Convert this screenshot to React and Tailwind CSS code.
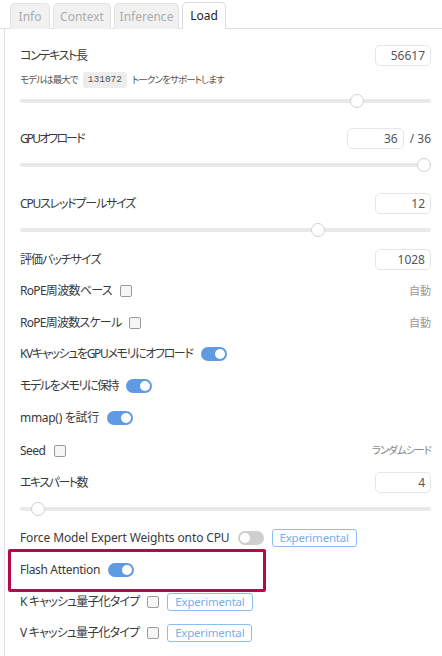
const FONT = { fontFamily: '"Noto Sans", "Noto Sans CJK JP", sans-serif', fontFeatureSettings: '"palt"' };

const TABS = [
  { name: 'Info', w: 'w-[40px]' },
  { name: 'Context', w: 'w-[58px]' },
  { name: 'Inference', w: 'w-[65px]' },
  { name: 'Load', w: 'w-[44px]' },
];

function NumberBox({ value, className = 'w-[56px]' }) {
  return (
    <div
      className={
        'h-[21px] rounded-[5px] border border-[#e6e6e6] bg-white flex items-center justify-end pr-[5px] text-[12px] text-[#555] ' +
        className
      }
    >
      {value}
    </div>
  );
}

function Slider({ pct }) {
  return (
    <div className="relative h-[14px] flex items-center">
      <div className="w-full h-[4px] rounded-full bg-[#e9e9e9]" />
      <div
        className="absolute top-0 w-[14px] h-[14px] rounded-full bg-white border-[1.5px] border-[#d0d0d0]"
        style={{ left: `calc(${pct} * (100% - 14px))` }}
      />
    </div>
  );
}

function Checkbox() {
  return <span className="w-[12px] h-[12px] rounded-[2px] border border-[#9a9a9a] bg-[#f6f6f6] shrink-0" />;
}

function Toggle({ on = true }) {
  return (
    <span
      className={
        'w-[26px] h-[14px] rounded-full flex items-center px-[2px] shrink-0 ' +
        (on ? 'bg-[#5f9be2] justify-end' : 'bg-[#cfcfcf] justify-start')
      }
    >
      <span className="w-[10px] h-[10px] rounded-full bg-white" />
    </span>
  );
}

function Badge() {
  return (
    <span className="h-[18px] px-[7px] rounded-[3px] border border-[#8cbdf2] text-[#79aeea] text-[11.5px] tracking-[-0.2px] flex items-center leading-none">
      Experimental
    </span>
  );
}

function Row({ children, className = '' }) {
  return <div className={'h-[20px] flex items-center gap-[8px] text-[12px] text-[#3a3a3a] ' + className}>{children}</div>;
}

function FieldRow({ label, tight, children, className = '' }) {
  return (
    <div className={'h-[21px] flex items-center justify-between text-[12px] text-[#3a3a3a] ' + className}>
      <span className={tight}>{label}</span>
      {children}
    </div>
  );
}

export default function App() {
  return (
    <div className="w-[442px] h-[656px] bg-white overflow-hidden" style={FONT}>
      <div className="h-[29px] flex items-end gap-[3px] pl-[10px] border-b border-[#dedede]">
        {TABS.map((t) => (
          <div
            key={t.name}
            className={
              'flex items-center justify-center rounded-t-[5px] border border-b-0 text-[12px] -mb-px ' +
              t.w +
              (t.name === 'Load'
                ? ' bg-white border-[#dcdcdc] text-[#222] h-[27px]'
                : ' bg-[#f1f1f1] border-[#e3e3e3] text-[#acacac] h-[26px]')
            }
          >
            {t.name}
          </div>
        ))}
      </div>

      <div className="ml-[4px] h-[627px] border-l border-[#dedede] pl-[15px] pr-[11px] pt-[16px] flex flex-col">
        <FieldRow label="コンテキスト長" tight="tracking-[-1.3px]">
          <NumberBox value="56617" />
        </FieldRow>
        <div className="mt-[6px] h-[16px] flex items-center text-[9.5px] text-[#555] tracking-[-0.9px]">
          <span>モデルは最大で</span>
          <span className="mx-[5px] h-[16px] px-[5px] rounded-[3px] bg-[#ededed] flex items-center font-mono text-[9.5px] tracking-normal text-[#555]">
            131072
          </span>
          <span>トークンをサポートします</span>
        </div>
        <div className="mt-[6px]">
          <Slider pct={0.832} />
        </div>

        <FieldRow label="GPUオフロード" tight="tracking-[-1.9px]" className="mt-[20px]">
          <div className="flex items-center gap-[6px]">
            <NumberBox value="36" className="w-[57px]" />
            <span className="text-[12px] text-[#555]">/ 36</span>
          </div>
        </FieldRow>
        <div className="mt-[9px]">
          <Slider pct={1} />
        </div>

        <FieldRow label="CPUスレッドプールサイズ" tight="tracking-[-1.2px]" className="mt-[21px]">
          <NumberBox value="12" />
        </FieldRow>
        <div className="mt-[9px]">
          <Slider pct={0.734} />
        </div>

        <FieldRow label="評価バッチサイズ" tight="tracking-[-1px]" className="mt-[12px]">
          <NumberBox value="1028" />
        </FieldRow>

        <Row className="mt-[11px] justify-between">
          <span className="flex items-center gap-[8px]">
            <span className="tracking-[-0.7px]">RoPE周波数ベース</span> <Checkbox />
          </span>
          <span className="text-[11px] text-[#999]">自動</span>
        </Row>
        <Row className="mt-[12px] justify-between">
          <span className="flex items-center gap-[8px]">
            <span className="tracking-[-0.75px]">RoPE周波数スケール</span> <Checkbox />
          </span>
          <span className="text-[11px] text-[#999]">自動</span>
        </Row>
        <Row className="mt-[11px]">
          <span className="tracking-[-1.35px]">KVキャッシュをGPUメモリにオフロード</span> <Toggle />
        </Row>
        <Row className="mt-[12px]">
          <span className="tracking-[-1.4px]">モデルをメモリに保持</span> <Toggle />
        </Row>
        <Row className="mt-[12px]">
          <span className="tracking-[-0.3px]">mmap() を試行</span> <Toggle />
        </Row>
        <Row className="mt-[13px] justify-between">
          <span className="flex items-center gap-[8px]">
            <span className="tracking-[-0.5px]">Seed</span> <Checkbox />
          </span>
          <span className="text-[10.5px] text-[#888] tracking-[-1px]">ランダムシード</span>
        </Row>

        <FieldRow label="エキスパート数" tight="tracking-[-1.5px]" className="mt-[11px]">
          <NumberBox value="4" />
        </FieldRow>
        <div className="mt-[9px]">
          <Slider pct={0.028} />
        </div>

        <Row className="mt-[12px]">
          <span className="tracking-[-0.12px]">Force Model Expert Weights onto CPU</span> <Toggle on={false} /> <Badge />
        </Row>
        <div className="relative mt-[12px]">
          <Row>
            <span className="tracking-[-0.33px]">Flash Attention</span> <Toggle />
          </Row>
          <div className="absolute left-[-12px] top-[-11px] w-[258px] h-[43px] border-[3px] border-[#b8084a] rounded-[2px]" />
        </div>
        <Row className="mt-[12px]">
          <span className="tracking-[-0.85px]">K キャッシュ量子化タイプ</span> <Checkbox /> <Badge />
        </Row>
        <Row className="mt-[11px]">
          <span className="tracking-[-0.85px]">V キャッシュ量子化タイプ</span> <Checkbox /> <Badge />
        </Row>
      </div>
    </div>
  );
}
